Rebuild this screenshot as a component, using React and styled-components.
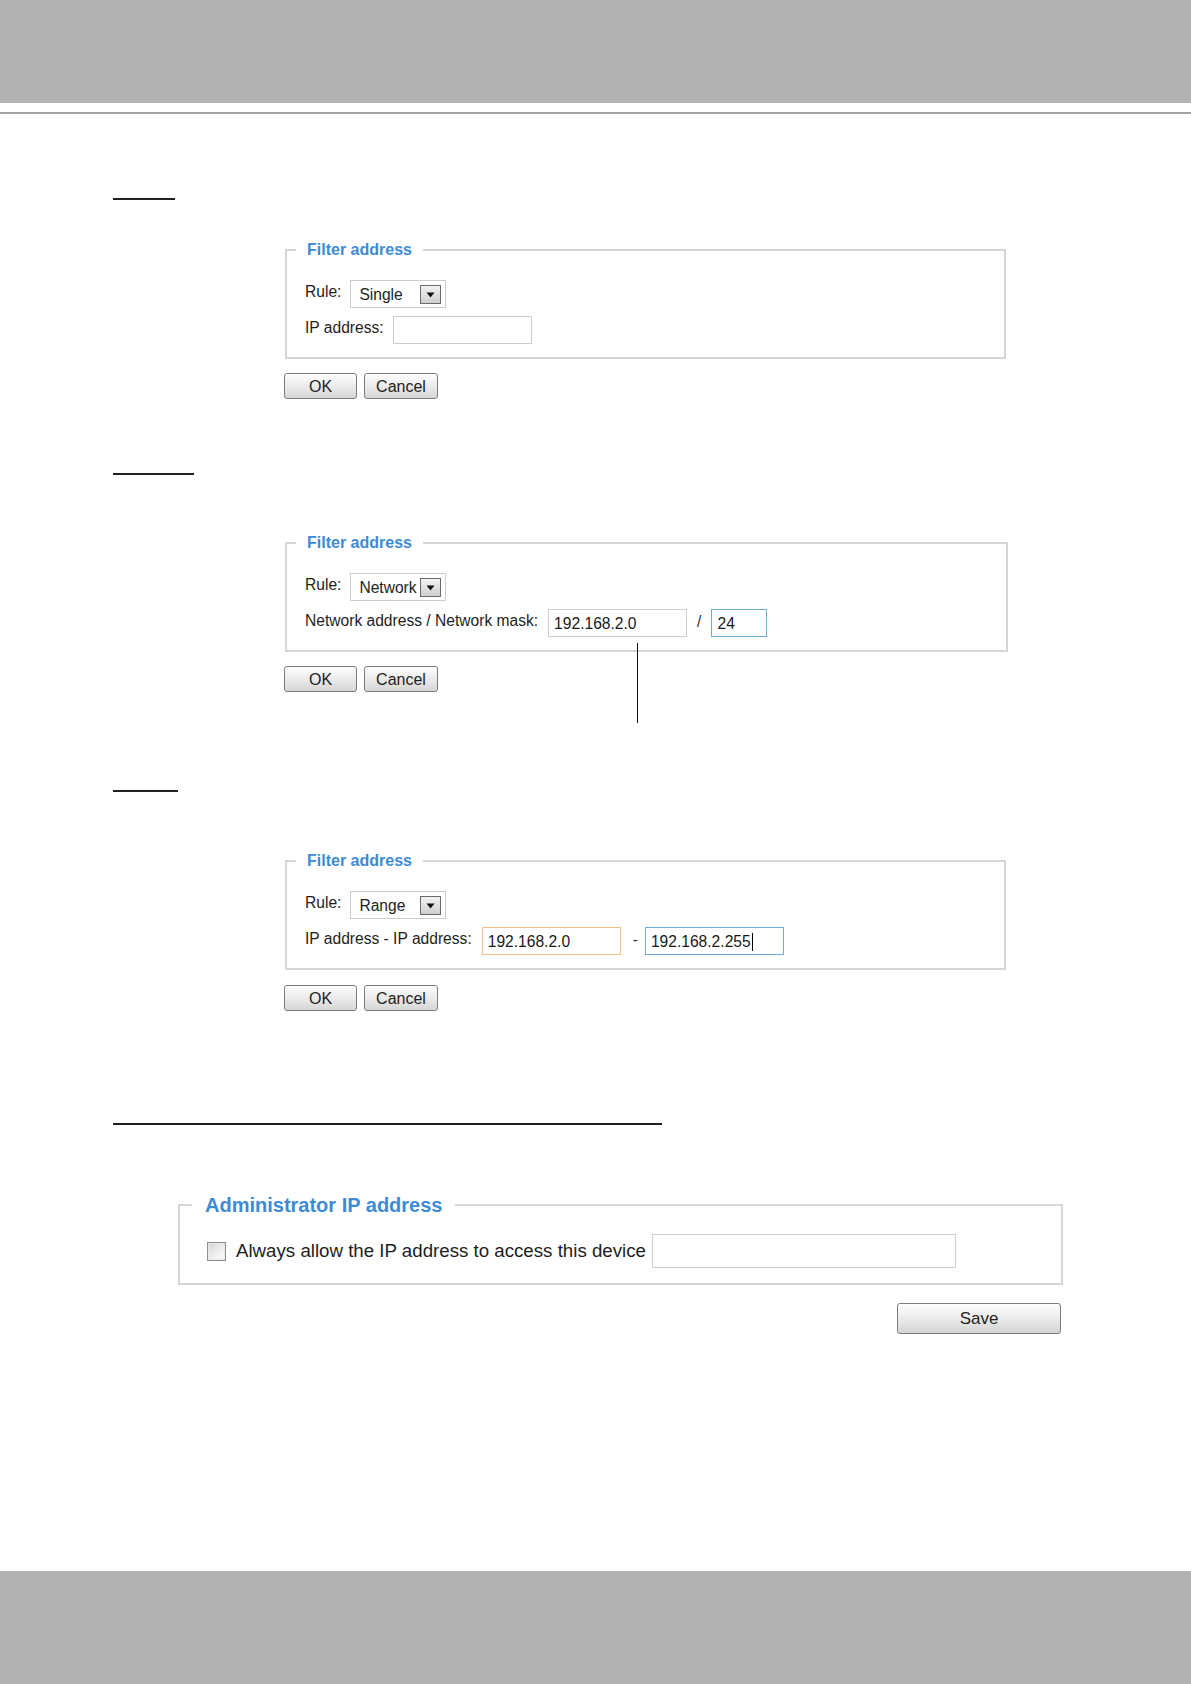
import React from 'react';
import styled, { createGlobalStyle } from 'styled-components';

const GlobalStyle = createGlobalStyle`
    html, body {
        margin: 0;
        padding: 0;
        background: #ffffff;
    }
    body {
        font-family: 'Liberation Sans', Arial, sans-serif;
        color: #222222;
    }
`;

// filter examples shown in the manual page
const filterExamples = [
    {
        id: 'single',
        barWidth: 62,
        barTop: 84,
        boxTop: 40,
        boxWidth: 721,
        btnTop: 14,
        rule: 'Single',
    },
    {
        id: 'network',
        barWidth: 81,
        barTop: 74,
        boxTop: 58,
        boxWidth: 723,
        btnTop: 14,
        rule: 'Network',
    },
    {
        id: 'range',
        barWidth: 65,
        barTop: 98,
        boxTop: 59,
        boxWidth: 721,
        btnTop: 15,
        rule: 'Range',
    },
];

function DropArrow() {
    return (
        <ArrowBox>
            <svg width="9" height="6" viewBox="0 0 9 6">
                <polygon points="0.5,0.5 8.5,0.5 4.5,5.5" fill="#111111" />
            </svg>
        </ArrowBox>
    );
}

function SecondRow({ kind }) {
    if (kind === 'single') {
        return (
            <Row>
                <Label>IP address:</Label>
                <Field $w={139} $ml={9}></Field>
            </Row>
        );
    }
    if (kind === 'network') {
        return (
            <Row>
                <Label>Network address / Network mask:</Label>
                <Field $w={139} $ml={10}>
                    192.168.2.0
                    <Callout />
                </Field>
                <Sep $l={10} $r={10}>/</Sep>
                <Field $w={56} $tone="blue">24</Field>
            </Row>
        );
    }
    return (
        <Row>
            <Label>IP address - IP address:</Label>
            <Field $w={139} $ml={10} $tone="orange">192.168.2.0</Field>
            <Sep $l={12} $r={7}>-</Sep>
            <Field $w={139} $tone="blue">
                192.168.2.255<Caret />
            </Field>
        </Row>
    );
}

export default function App() {
    return (
        <Page>
            <GlobalStyle />
            <Header />
            <HeaderRule />
            <Main>
                {filterExamples.map(ex => (
                    <Section key={ex.id}>
                        <HeadBar $w={ex.barWidth} $mt={ex.barTop} />
                        <FilterBox $w={ex.boxWidth} $mt={ex.boxTop}>
                            <FilterLegend>Filter address</FilterLegend>
                            <FilterBody>
                                <Row>
                                    <Label>Rule:</Label>
                                    <FakeSelect>
                                        <span>{ex.rule}</span>
                                        <DropArrow />
                                    </FakeSelect>
                                </Row>
                                <SecondRow kind={ex.id} />
                            </FilterBody>
                        </FilterBox>
                        <ButtonRow $mt={ex.btnTop}>
                            <Button $w={73}>OK</Button>
                            <Button $w={74}>Cancel</Button>
                        </ButtonRow>
                    </Section>
                ))}

                <HeadBar $w={549} $mt={112} />
                <AdminBox>
                    <AdminLegend>Administrator IP address</AdminLegend>
                    <AdminBody>
                        <Check type="checkbox" readOnly />
                        <AdminText>Always allow the IP address to access this device</AdminText>
                        <Field $w={304} $h={34} $ml={6}></Field>
                    </AdminBody>
                </AdminBox>
                <SaveRow>
                    <SaveButton>Save</SaveButton>
                </SaveRow>
            </Main>
            <Footer />
        </Page>
    );
}

// STYLED COMPONENTS //

const Page = styled.div`
    display: flex;
    flex-direction: column;
    min-height: 1684px;
`;
const Header = styled.div`
    height: 103px;
    background-color: #b2b2b2;
`;
const HeaderRule = styled.div`
    margin-top: 9px;
    height: 2px;
    background-color: #a2a2a2;
`;
const Footer = styled.div`
    margin-top: auto;
    height: 113px;
    background-color: #b2b2b2;
`;
const Main = styled.div`
    padding-left: 113px;
    display: flex;
    flex-direction: column;
`;
const Section = styled.div`
    display: flex;
    flex-direction: column;
`;
const HeadBar = styled.div`
    width: ${p => p.$w}px;
    height: 2px;
    margin-top: ${p => p.$mt}px;
    background-color: #231f20;
`;
const FilterBox = styled.fieldset`
    box-sizing: border-box;
    width: ${p => p.$w}px;
    margin: ${p => p.$mt}px 0 0 172px;
    padding: 0;
    border: 2px solid #d6d6d6;
    min-width: 0;
`;
const FilterLegend = styled.legend`
    margin-left: 9px;
    padding: 0 11px;
    font-size: 16px;
    line-height: 20px;
    font-weight: 700;
    color: #3d8bd5;
`;
const FilterBody = styled.div`
    display: flex;
    flex-direction: column;
    gap: 8px;
    padding: 20px 0 13px 18px;
`;
const Row = styled.div`
    display: flex;
    align-items: center;
    height: 28px;
    font-size: 15.6px;
`;
const Label = styled.span`
    margin-top: -4px;
    white-space: nowrap;
    color: #1e1e1e;
`;
const FakeSelect = styled.div`
    box-sizing: border-box;
    width: 96px;
    height: 28px;
    margin-left: 9px;
    padding: 2px 4px 0 8px;
    display: flex;
    align-items: center;
    justify-content: space-between;
    border: 1px solid #cdcdcd;
    background: #ffffff;
    font-size: 15.6px;
`;
const ArrowBox = styled.span`
    box-sizing: border-box;
    flex-shrink: 0;
    width: 21px;
    height: 19px;
    margin-top: -2px;
    display: flex;
    align-items: center;
    justify-content: center;
    padding-top: 2px;
    border: 1px solid #6a6a6a;
    background: linear-gradient(#f2f2f2, #cfcfcf);
`;
const toneColor = {
    plain: '#cdcdcd',
    orange: '#f3c08c',
    blue: '#6aaedf',
};
const Field = styled.div`
    position: relative;
    box-sizing: border-box;
    width: ${p => p.$w}px;
    height: ${p => p.$h || 28}px;
    margin-left: ${p => p.$ml || 0}px;
    padding: 2px 5px 0;
    display: flex;
    align-items: center;
    border: 1px solid ${p => toneColor[p.$tone || 'plain']};
    background: #ffffff;
    font-size: 15.6px;
    color: #1a1a1a;
`;
const Caret = styled.span`
    display: inline-block;
    width: 1px;
    height: 18px;
    margin-left: 1px;
    background: #000000;
`;
// annotation line that points at the network address field
const Callout = styled.span`
    position: absolute;
    left: 88px;
    top: 33px;
    width: 1px;
    height: 80px;
    background: #111111;
`;
const Sep = styled.span`
    margin: -2px ${p => p.$r}px 0 ${p => p.$l}px;
    color: #333333;
`;
const ButtonRow = styled.div`
    display: flex;
    gap: 7px;
    margin: ${p => p.$mt}px 0 0 171px;
`;
const Button = styled.button`
    box-sizing: border-box;
    width: ${p => p.$w}px;
    height: 26px;
    padding: 1px 0 0;
    border: 1px solid #7b7b7b;
    border-radius: 3px;
    background: linear-gradient(#fefefe, #e9e9e9 55%, #d6d6d6);
    font-family: 'Liberation Sans', Arial, sans-serif;
    font-size: 16px;
    color: #222222;
`;
const AdminBox = styled.fieldset`
    box-sizing: border-box;
    width: 885px;
    margin: 68px 0 0 65px;
    padding: 0;
    border: 2px solid #d6d6d6;
    min-width: 0;
`;
const AdminLegend = styled.legend`
    margin-left: 12px;
    padding: 0 13px;
    font-size: 20px;
    line-height: 24px;
    font-weight: 700;
    color: #3d8bd5;
`;
const AdminBody = styled.div`
    display: flex;
    align-items: center;
    padding: 17px 0 15px 27px;
    font-size: 18.7px;
`;
const Check = styled.input`
    appearance: none;
    box-sizing: border-box;
    width: 19px;
    height: 19px;
    margin: 0;
    border: 1px solid #8f8f8f;
    background: linear-gradient(135deg, #d6d6d6, #f4f4f4 70%);
    box-shadow: inset 0 0 0 1px #e8e8e8;
`;
const AdminText = styled.span`
    margin-left: 10px;
    white-space: nowrap;
    color: #1e1e1e;
`;
const SaveRow = styled.div`
    display: flex;
    justify-content: flex-end;
    width: 883px;
    margin: 18px 0 0 65px;
`;
const SaveButton = styled.button`
    box-sizing: border-box;
    width: 164px;
    height: 31px;
    padding: 1px 0 0;
    border: 1px solid #7b7b7b;
    border-radius: 3px;
    background: linear-gradient(#fefefe, #e9e9e9 55%, #d4d4d4);
    font-family: 'Liberation Sans', Arial, sans-serif;
    font-size: 17px;
    color: #222222;
`;
